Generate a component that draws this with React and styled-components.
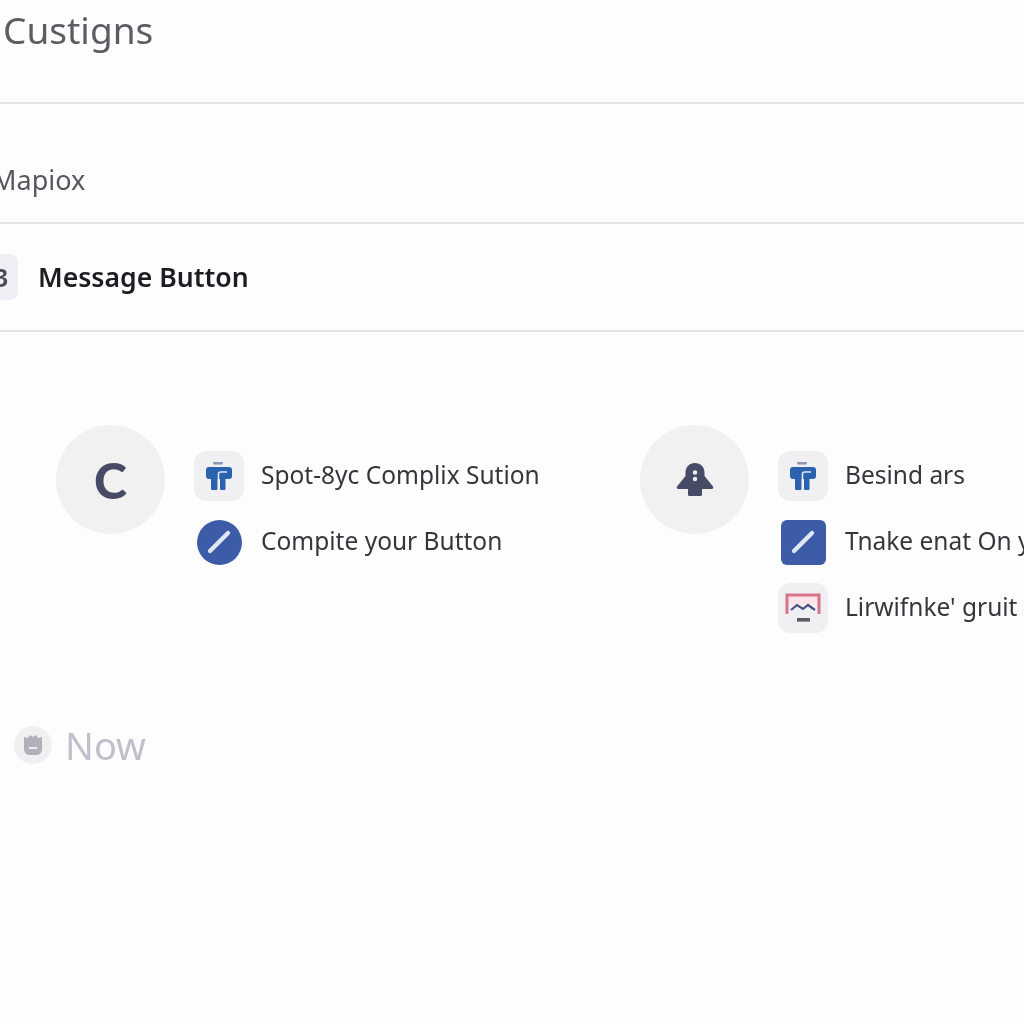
import React from "react";
import styled, { createGlobalStyle } from "styled-components";

const GlobalStyle = createGlobalStyle`
  html, body {
    margin: 0;
    padding: 0;
    background: #fdfdfd;
  }
`;

const PinIcon = () => (
  <svg width="26" height="28" viewBox="0 0 26 28">
    <rect x="7" y="0" width="10" height="2.4" rx="1" fill="#8d98b4" />
    <path d="M3 5h20a3 3 0 0 1 3 3v6a3 3 0 0 1-3 3h-3.500v10a1 1 0 0 1-1 1H15a1 1 0 0 1-1-1V17h-2.500v10a1 1 0 0 1-1 1H6a1 1 0 0 1-1-1V17H3a3 3 0 0 1-3-3V8a3 3 0 0 1 3-3z" fill="#2b62ad" />
    <path d="M12.500 20v-8a2 2 0 0 1 2-2H21" fill="none" stroke="#dfe6f3" strokeWidth="1.600" />
  </svg>
);

const SlashIcon = () => (
  <svg width="30" height="30" viewBox="0 0 30 30">
    <line x1="6" y1="24" x2="24" y2="6" stroke="#dfe7f6" strokeWidth="4.400" strokeLinecap="round" />
  </svg>
);

const ScreenIcon = () => (
  <svg width="36" height="30" viewBox="0 0 36 30">
    <path d="M2 2h32v9H2z" fill="#fbe3e8" />
    <path d="M2 21V2h32v19" fill="none" stroke="#d8738a" strokeWidth="3" />
    <path d="M6 17l6-5 6 4 5-4 7 5" fill="none" stroke="#44527f" strokeWidth="2.200" />
    <rect x="12" y="25" width="13" height="3.600" fill="#5b5d66" />
  </svg>
);

const RocketIcon = () => (
  <svg width="38" height="34" viewBox="0 0 38 34">
    <path d="M19 0c5.500 0 9.500 4 9.500 9.500V13L37 23.500c.8 1.200.2 2.500-1.300 2.500H26v5.500a1.500 1.500 0 0 1-1.500 1.500h-11a1.500 1.500 0 0 1-1.500-1.500V26H2.300C.8 26 .2 24.700 1 23.500L9.500 13V9.500C9.500 4 13.500 0 19 0z" fill="#474b66" />
    <circle cx="19" cy="9.500" r="2.200" fill="#efefef" />
    <circle cx="19" cy="16" r="2.200" fill="#efefef" />
  </svg>
);

const FaceIcon = () => (
  <svg width="22" height="24" viewBox="0 0 22 24">
    <path d="M2 4l4 1 2-3 3 2 3-2 2 3 4-1v12c0 4-3 6-6 6H8c-3 0-6-2-6-6z" fill="#b0b1b9" />
    <path d="M7 15h8" stroke="#ececf0" strokeWidth="2" />
  </svg>
);

const ROWS_LEFT = [
  { icon: <PinIcon />, tone: "tile", text: "Spot-8yc Complix Sution" },
  { icon: <SlashIcon />, tone: "round", text: "Compite your Button" },
];

const ROWS_RIGHT = [
  { icon: <PinIcon />, tone: "tile", text: "Besind ars" },
  { icon: <SlashIcon />, tone: "square", text: "Tnake enat On your" },
  { icon: <ScreenIcon />, tone: "tile", text: "Lirwifnke' gruit for" },
];

const FeatureList = ({ rows }) => (
  <List>
    {rows.map((row) => (
      <Row key={row.text}>
        <IconSlot>
          <IconBox $tone={row.tone}>{row.icon}</IconBox>
        </IconSlot>
        <RowText>{row.text}</RowText>
      </Row>
    ))}
  </List>
);

const App = () => {
  return (
    <Page>
      <GlobalStyle />
      <Header>
        <Title>Custigns</Title>
      </Header>
      <MapRow>
        <MapLabel>Mapiox</MapLabel>
      </MapRow>
      <MessageRow>
        <Badge>3</Badge>
        <MessageLabel>Message Button</MessageLabel>
      </MessageRow>
      <Columns>
        <Column>
          <Avatar>
            <AvatarLetter>C</AvatarLetter>
          </Avatar>
          <FeatureList rows={ROWS_LEFT} />
        </Column>
        <Column>
          <Avatar>
            <RocketIcon />
          </Avatar>
          <FeatureList rows={ROWS_RIGHT} />
        </Column>
      </Columns>
      <NowRow>
        <NowIcon>
          <FaceIcon />
        </NowIcon>
        <NowText>Now</NowText>
      </NowRow>
    </Page>
  );
};
export default App;

const Page = styled.div`
  width: 1024px;
  height: 1024px;
  overflow: hidden;
  background: #fdfdfd;
  font-family: "Noto Sans", "Open Sans", sans-serif;
  filter: blur(0.5px);
`;
const Header = styled.div`
  height: 102px;
  padding-left: 3px;
  border-bottom: 2px solid #e3e4e6;
`;
const Title = styled.h1`
  margin: 0;
  padding-top: 7px;
  font-size: 37px;
  line-height: 46px;
  font-weight: 400;
  color: #5b5d62;
`;
const MapRow = styled.div`
  height: 118px;
  display: flex;
  align-items: center;
  border-bottom: 2px solid #e3e4e6;
`;
const MapLabel = styled.div`
  margin-left: -8px;
  margin-top: 32px;
  font-size: 27px;
  color: #55585e;
`;
const MessageRow = styled.div`
  height: 106px;
  display: flex;
  align-items: center;
  gap: 20px;
  border-bottom: 2px solid #e3e4e6;
`;
const Badge = styled.div`
  width: 46px;
  height: 46px;
  margin-left: -28px;
  padding-left: 12px;
  box-sizing: border-box;
  border-radius: 8px;
  background: #eeeef4;
  display: flex;
  align-items: center;
  justify-content: center;
  font-size: 26px;
  font-weight: 600;
  color: #4a4c56;
`;
const MessageLabel = styled.div`
  font-size: 26.600px;
  font-weight: 600;
  color: #1c1d22;
`;
const Columns = styled.div`
  display: grid;
  grid-template-columns: 584px 1fr;
  padding: 93px 0 0 56px;
`;
const Column = styled.div`
  display: flex;
  align-items: flex-start;
  gap: 29px;
  min-width: 0;
`;
const Avatar = styled.div`
  width: 109px;
  height: 109px;
  flex: none;
  border-radius: 50%;
  background: #f1f1f2;
  display: flex;
  align-items: center;
  justify-content: center;
`;
const AvatarLetter = styled.span`
  font-family: "Lato", sans-serif;
  font-size: 50px;
  line-height: 50px;
  font-weight: 900;
  color: #474b66;
`;
const List = styled.div`
  display: flex;
  flex-direction: column;
  gap: 16px;
  padding-top: 26px;
`;
const Row = styled.div`
  display: flex;
  align-items: center;
  gap: 17px;
  height: 50px;
  white-space: nowrap;
`;
const IconSlot = styled.div`
  width: 50px;
  height: 50px;
  flex: none;
  display: flex;
  align-items: center;
  justify-content: center;
`;
const IconBox = styled.div`
  width: ${(p) => (p.$tone === "tile" ? "50px" : "45px")};
  height: ${(p) => (p.$tone === "tile" ? "50px" : "45px")};
  border-radius: ${(p) => (p.$tone === "round" ? "50%" : p.$tone === "square" ? "6px" : "12px")};
  background: ${(p) => (p.$tone === "tile" ? "#f0f0f3" : "#3d5ca8")};
  display: flex;
  align-items: center;
  justify-content: center;
`;
const RowText = styled.div`
  margin-top: -3px;
  font-size: 24.500px;
  color: #35373c;
`;
const NowRow = styled.div`
  display: flex;
  align-items: center;
  gap: 13px;
  padding: 92px 0 0 14px;
`;
const NowIcon = styled.div`
  width: 38px;
  height: 38px;
  border-radius: 50%;
  background: #f0f0f2;
  display: flex;
  align-items: center;
  justify-content: center;
`;
const NowText = styled.div`
  font-size: 38px;
  line-height: 40px;
  color: #bfc0c9;
`;
